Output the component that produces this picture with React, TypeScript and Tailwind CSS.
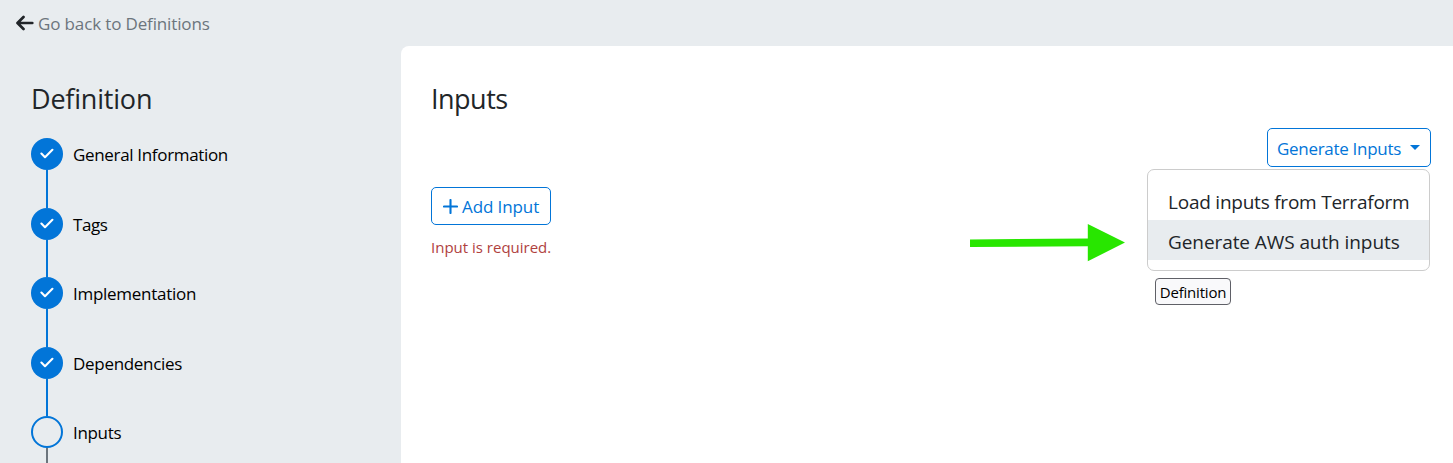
const steps = [
  { label: "General Information", done: true, spacing: "tracking-[-0.33px]" },
  { label: "Tags", done: true, spacing: "tracking-[-0.4px]" },
  { label: "Implementation", done: true, spacing: "tracking-[-0.28px]" },
  { label: "Dependencies", done: true, spacing: "tracking-[-0.3px]" },
  { label: "Inputs", done: false, spacing: "tracking-[-0.33px]" },
];

function CheckIcon() {
  return (
    <svg width="14" height="11" viewBox="0 0 14 11" fill="none" className="-mt-px">
      <path d="M1.4 5.6 L5 9.2 L12.4 1.8" stroke="white" strokeWidth="2.1" strokeLinecap="round" strokeLinejoin="round" />
    </svg>
  );
}

function Sidebar() {
  return (
    <aside className="w-[401px] shrink-0 pl-[31px] pt-[33px]">
      <h1 className="h-[40px] text-[27px] leading-[40px] tracking-[-0.2px] text-[#212529]">
        <span>Definition</span>
      </h1>
      <ol className="pt-[19px]">
        {steps.map((step) => (
          <li key={step.label} className="flex h-[69.5px] gap-[10px]">
            <div className="flex w-8 flex-col items-center">
              <div
                className={
                  step.done
                    ? "flex size-8 shrink-0 items-center justify-center rounded-full bg-[#0275d8]"
                    : "size-8 shrink-0 rounded-full border-2 border-[#0275d8]"
                }
              >
                {step.done && <CheckIcon />}
              </div>
              <div className={step.done ? "w-[2px] grow bg-[#0275d8]" : "w-[2px] grow bg-[#6c757d]"} />
            </div>
            <span className={`pt-[1px] text-[17px] leading-8 text-black ${step.spacing}`}>{step.label}</span>
          </li>
        ))}
      </ol>
    </aside>
  );
}

function GenerateMenu() {
  return (
    <div className="relative">
      <button className="flex h-[39px] w-[164px] items-center rounded-[5px] border border-[#0275d8] pl-[9px] text-[17px] text-[#0275d8]">
        <span className="whitespace-nowrap pt-[2px] tracking-[-0.3px]">Generate Inputs</span>
        <svg width="10" height="5" viewBox="0 0 10 5" className="ml-auto mb-px mr-[10px]">
          <path d="M0 0H10L5 5Z" fill="#0275d8" />
        </svg>
      </button>
      <div className="absolute right-px top-[41px] w-[283px] rounded-[7px] border border-[#cccccc] bg-white pb-[10px] pt-[10px] text-[19px] text-[#212529]">
        <div className="h-10 whitespace-nowrap pl-5 leading-[44px] tracking-[-0.23px]">
          <span>Load inputs from Terraform</span>
        </div>
        <div className="h-10 whitespace-nowrap bg-[#e8ecef] pl-5 leading-[44px] tracking-[-0.08px]">
          <span>Generate AWS auth inputs</span>
        </div>
      </div>
      <div className="absolute right-[200px] top-[150px] h-[27px] w-[76px] rounded-[4px] border border-[#5f6067] bg-[#f9f9fb] text-center text-[15px] leading-[27px] tracking-[-0.2px] text-black">
        <span>Definition</span>
      </div>
    </div>
  );
}

export default function App() {
  return (
    <div className="flex h-[463px] w-full flex-col overflow-hidden bg-[#e8ecef] font-['Open_Sans','Noto_Sans',sans-serif]">
      <header className="flex h-[46px] shrink-0 items-center gap-[4px] pl-4">
        <svg width="18" height="16" viewBox="0 0 18 16" fill="none" stroke="#212529" strokeWidth="2.7" strokeLinecap="round" strokeLinejoin="round" className="-mt-px">
          <path d="M7.5 2 L1.5 8 L7.5 14 M1.7 8 H16.3" />
        </svg>
        <a className="pt-px text-[17px] tracking-[-0.14px] text-[#6c757d]">Go back to Definitions</a>
      </header>
      <div className="flex min-h-0 grow">
        <Sidebar />
        <main className="grow rounded-tl-[8px] bg-white pl-[30px] pr-[22px] pt-[33px]">
          <h2 className="h-[40px] text-[27px] leading-[40px] tracking-[-0.5px] text-[#212529]">
            <span>Inputs</span>
          </h2>
          <div className="flex justify-end pt-[9px]">
            <GenerateMenu />
          </div>
          <div className="flex items-start pt-5">
            <button className="flex h-[38px] w-[120px] items-center gap-[4px] whitespace-nowrap rounded-[5px] border border-[#0275d8] pl-[11px] text-[17px] text-[#0275d8]">
              <svg width="15" height="15" viewBox="0 0 15 15" fill="none" stroke="#0275d8" strokeWidth="2.1" strokeLinecap="round">
                <path d="M7.5 1V14M1 7.5H14" />
              </svg>
              <span className="pt-[2px] tracking-[-0.1px]">Add Input</span>
            </button>
            <svg width="156" height="38" viewBox="0 0 156 38" className="ml-[419px] mt-[37px]">
              <path d="M0 15.4 L117.8 14.4 V0 L155 18.5 L117.8 37.3 V22.3 L0 23.1Z" fill="#28e600" />
            </svg>
          </div>
          <p className="-mt-[27px] text-[15px] leading-6 text-[#b0413e]">
            <span>Input is required.</span>
          </p>
        </main>
      </div>
    </div>
  );
}
